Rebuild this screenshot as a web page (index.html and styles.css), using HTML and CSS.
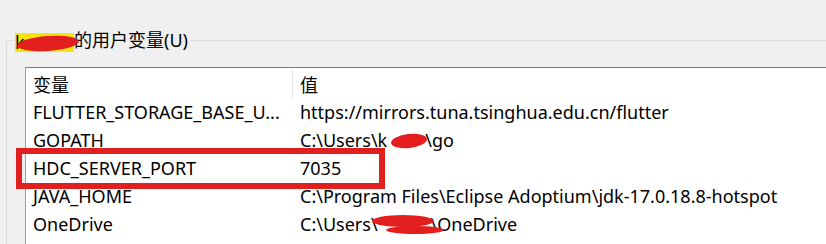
FILE: index.html
```html
<!DOCTYPE html>
<html lang="zh-CN">
<head>
  <meta charset="UTF-8" />
  <title>用户变量</title>
  <link rel="stylesheet" href="styles.css">
</head>
<body>

<fieldset class="group">
  <legend><span class="title-name">k</span>的用户变量(<u>U</u>)</legend>

  <div class="listbox">
    <div class="row head">
      <div class="col name">变量</div>
      <div class="col value">值</div>
    </div>
    <div class="row">
      <div class="col name">FLUTTER_STORAGE_BASE_U...</div>
      <div class="col value">https://mirrors.tuna.tsinghua.edu.cn/flutter</div>
    </div>
    <div class="row">
      <div class="col name">GOPATH</div>
      <div class="col value">C:\Users\k<span class="scribble gopath"></span>\go</div>
    </div>
    <div class="row">
      <div class="col name">HDC_SERVER_PORT</div>
      <div class="col value">7035</div>
    </div>
    <div class="row">
      <div class="col name">JAVA_HOME</div>
      <div class="col value">C:\Program Files\Eclipse Adoptium\jdk-17.0.18.8-hotspot</div>
    </div>
    <div class="row">
      <div class="col name">OneDrive</div>
      <div class="col value">C:\Users\<span class="scribble onedrive"></span>\OneDrive</div>
    </div>

    <!-- marker drawn over the row -->
    <div class="highlight-box"></div>
  </div>
</fieldset>

</body>
</html>
```

FILE: styles.css
```css
* { box-sizing: border-box; }

html, body {
  height: 244px;
  overflow: hidden;
}

body {
  margin: 0;
  background-color: #f0f0f0;
  font-family: "Noto Sans", "Noto Sans CJK SC", sans-serif;
  font-size: 18px;
  color: #000;
}

.group {
  margin: 28px -20px 0 6px;
  padding: 15px 0 0 0;
  border: 1px solid #dcdcdc;
  border-right: none;
  border-bottom: none;
  min-width: 0;
}

.group legend {
  margin-left: 7px;
  padding: 0 2px 0 1px;
  font-size: 18px;
  line-height: 24px;
}

.group legend u {
  text-decoration: none;
}

.listbox {
  position: relative;
  margin-left: 18px;
  padding-top: 2px;
  background: #fff;
  border: 1px solid #7a7a7a;
  border-left-color: #a0a0a0;
  border-right: none;
  border-bottom: none;
  height: 177px;
}

.row {
  display: flex;
  height: 28px;
  line-height: 28px;
  white-space: nowrap;
}

.row.head {
  height: 30px;
  line-height: 30px;
  margin-top: -2px;
  padding-top: 2px;
}

.col.name {
  width: 266px;
  padding-left: 7px;
  flex-shrink: 0;
}

.col.value {
  padding-left: 8px;
}

.head .col.value {
  border-left: 1px solid #e5e5e5;
  padding-left: 7px;
}

.title-name,
.scribble {
  position: relative;
  display: inline-block;
}

.title-name::after,
.scribble::after {
  content: "";
  position: absolute;
  background: #e31e1e;
  border-radius: 50%;
}

.title-name {
  background: #f5e50c;
  width: 59px;
  height: 19px;
  line-height: 19px;
  vertical-align: -2px;
}

.title-name::after {
  left: 2px;
  top: 3px;
  width: 62px;
  height: 15px;
  transform: rotate(-4deg);
}

.scribble {
  height: 28px;
  vertical-align: bottom;
}

.gopath {
  width: 38px;
}

.gopath::after {
  left: 4px;
  top: 8px;
  width: 36px;
  height: 14px;
  transform: rotate(-6deg);
}

.onedrive {
  width: 53px;
}

.onedrive::after {
  left: -6px;
  top: 5px;
  width: 62px;
  height: 12px;
  box-shadow: 12px 9px 0 -2px #e31e1e;
}

.highlight-box {
  position: absolute;
  left: -10px;
  top: 80px;
  width: 369px;
  height: 41px;
  border: 6px solid #e0201e;
}
```
